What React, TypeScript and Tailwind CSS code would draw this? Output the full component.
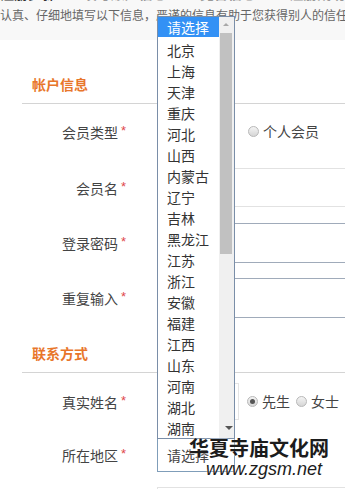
import React from "react";

const font = { fontFamily: '"Noto Sans CJK SC", "Noto Sans", sans-serif' };

const provinces = [
  "北京", "上海", "天津", "重庆", "河北", "山西", "内蒙古", "辽宁", "吉林", "黑龙江",
  "江苏", "浙江", "安徽", "福建", "江西", "山东", "河南", "湖北", "湖南",
];

function Radio({ checked = false }: { checked?: boolean }) {
  return (
    <span className="inline-flex items-center justify-center w-[11px] h-[11px] rounded-full border border-[#b8b8b8] bg-gradient-to-b from-[#f4f4f4] to-[#d6d6d6] shrink-0">
      {checked && <span className="w-[5px] h-[5px] rounded-full bg-[#555]" />}
    </span>
  );
}

function Label({ text }: { text: string }) {
  return (
    <>
      <div className="w-[118px] text-right text-[14px] text-[#444] leading-[20px] shrink-0">{text}</div>
      <div className="w-[39px] pl-[3px] text-[13px] text-[#e0474c] leading-[20px] shrink-0 relative -top-[1px]" style={{ fontFamily: '"Liberation Sans", Arial, sans-serif' }}>*</div>
    </>
  );
}

function Heading({ text }: { text: string }) {
  return (
    <div className="ml-[22px] h-[30px] border-b border-[#d4d4d4]">
      <div className="pl-[10px] text-[14px] leading-[20px] font-bold text-[#e8762b]">{text}</div>
    </div>
  );
}

export default function App() {
  return (
    <div className="relative w-[345px] h-[489px] overflow-hidden bg-white" style={font}>
      {/* top notice band */}
      <div className="h-[40px] bg-[#f8f8f8] overflow-hidden">
        <div className="-mt-[15px] h-[16px] whitespace-nowrap text-[14px] leading-[16px] font-bold">
          <span className="text-[#333]">注册步骤：</span>
          <span className="text-[#999]">1.填写账户信息</span>
          <span className="text-[#333]"> → </span>
          <span className="text-[#999]">2.完善信息</span>
          <span className="text-[#333]"> → </span>
          <span className="text-[#999]">3.注册成功</span>
        </div>
        <div className="mt-[6px] whitespace-nowrap text-[12px] leading-[16px] text-[#666]">
          认真、仔细地填写以下信息，严谨的信息有助于您获得别人的信任
        </div>
      </div>

      <div className="mt-[34px]">
        <Heading text="帐户信息" />
      </div>

      {/* 会员类型 */}
      <div className="mt-[8px] h-[39px] flex items-center">
        <Label text="会员类型" />
        <div className="flex items-center text-[14px] text-[#444]">
          <Radio />
          <span className="ml-[4px]">企业会员</span>
          <span className="ml-[20px]"><Radio /></span>
          <span className="ml-[4px]">个人会员</span>
        </div>
      </div>

      {/* 会员名 */}
      <div className="mt-[17px] h-[39px] flex items-center">
        <Label text="会员名" />
        <div className="w-[230px] h-[39px] border border-[#e2e2e2] shrink-0" />
      </div>

      {/* 登录密码 */}
      <div className="mt-[16px] h-[39px] flex items-center">
        <Label text="登录密码" />
        <div className="w-[230px] h-[40px] border border-[#a0abba] shrink-0" />
      </div>

      {/* 重复输入 */}
      <div className="mt-[16px] h-[39px] flex items-center">
        <Label text="重复输入" />
        <div className="w-[230px] h-[40px] border border-[#a0abba] shrink-0" />
      </div>

      <div className="mt-[26px]">
        <Heading text="联系方式" />
      </div>

      {/* 真实姓名 */}
      <div className="mt-[10px] h-[37px] flex items-center">
        <Label text="真实姓名" />
        <div className="w-[82px] h-[37px] border border-[#e4e4e4] shrink-0" />
        <div className="ml-[8px] flex items-center text-[14px] text-[#444]">
          <Radio checked />
          <span className="ml-[4px]">先生</span>
          <span className="ml-[6px]"><Radio /></span>
          <span className="ml-[4px]">女士</span>
        </div>
      </div>

      {/* 所在地区 */}
      <div className="mt-[18px] h-[34px] flex items-center">
        <Label text="所在地区" />
        <div className="w-[78px] h-[34px] border border-[#7f9db9] shrink-0 flex items-center pl-[9px] text-[14px] text-[#444]">
          请选择
        </div>
      </div>

      <div className="mt-[15px] flex">
        <div className="w-[157px] shrink-0" />
        <div className="w-[230px] h-[39px] border border-[#e2e2e2] shrink-0" />
      </div>

      {/* open dropdown list */}
      <div className="absolute left-[157px] top-[16px] w-[78px] h-[423px] border border-[#7a8ea8] bg-white flex">
        <div className="w-[61px] shrink-0 text-[14px] text-[#333]">
          <div className="h-[20px] leading-[20px] pl-[9px] bg-[#3391f5] text-white">请选择</div>
          <div className="mt-[3px]">
            {provinces.map((p) => (
              <div key={p} className="h-[21px] leading-[21px] pl-[9px]">{p}</div>
            ))}
          </div>
        </div>
        <div className="flex-1 bg-[#f0f0f0] relative">
          <div className="absolute left-[4px] top-[6px] w-0 h-0 border-l-[3px] border-r-[3px] border-b-[3px] border-l-transparent border-r-transparent border-b-[#a8a8a8]" />
          <div className="absolute left-[1px] right-[2px] top-[16px] h-[221px] bg-[#c1c1c1]" />
          <div className="absolute left-[6px] bottom-[8px] w-0 h-0 border-l-[4px] border-r-[4px] border-t-[4px] border-l-transparent border-r-transparent border-t-[#555]" />
        </div>
      </div>

      {/* watermark */}
      <div className="absolute left-[189px] top-[436px] text-[20px] leading-[24px] font-bold text-[#1c1c1c] whitespace-nowrap" style={{ textShadow: "0 0 2px #fff" }}>
        华夏寺庙文化网
      </div>
      <div className="absolute left-[206px] top-[459px] text-[18px] leading-[20px] italic text-[#1c1c1c] whitespace-nowrap" style={{ fontFamily: '"Liberation Sans", Arial, sans-serif', textShadow: "0 0 2px #fff" }}>
        www.zgsm.net
      </div>
    </div>
  );
}
